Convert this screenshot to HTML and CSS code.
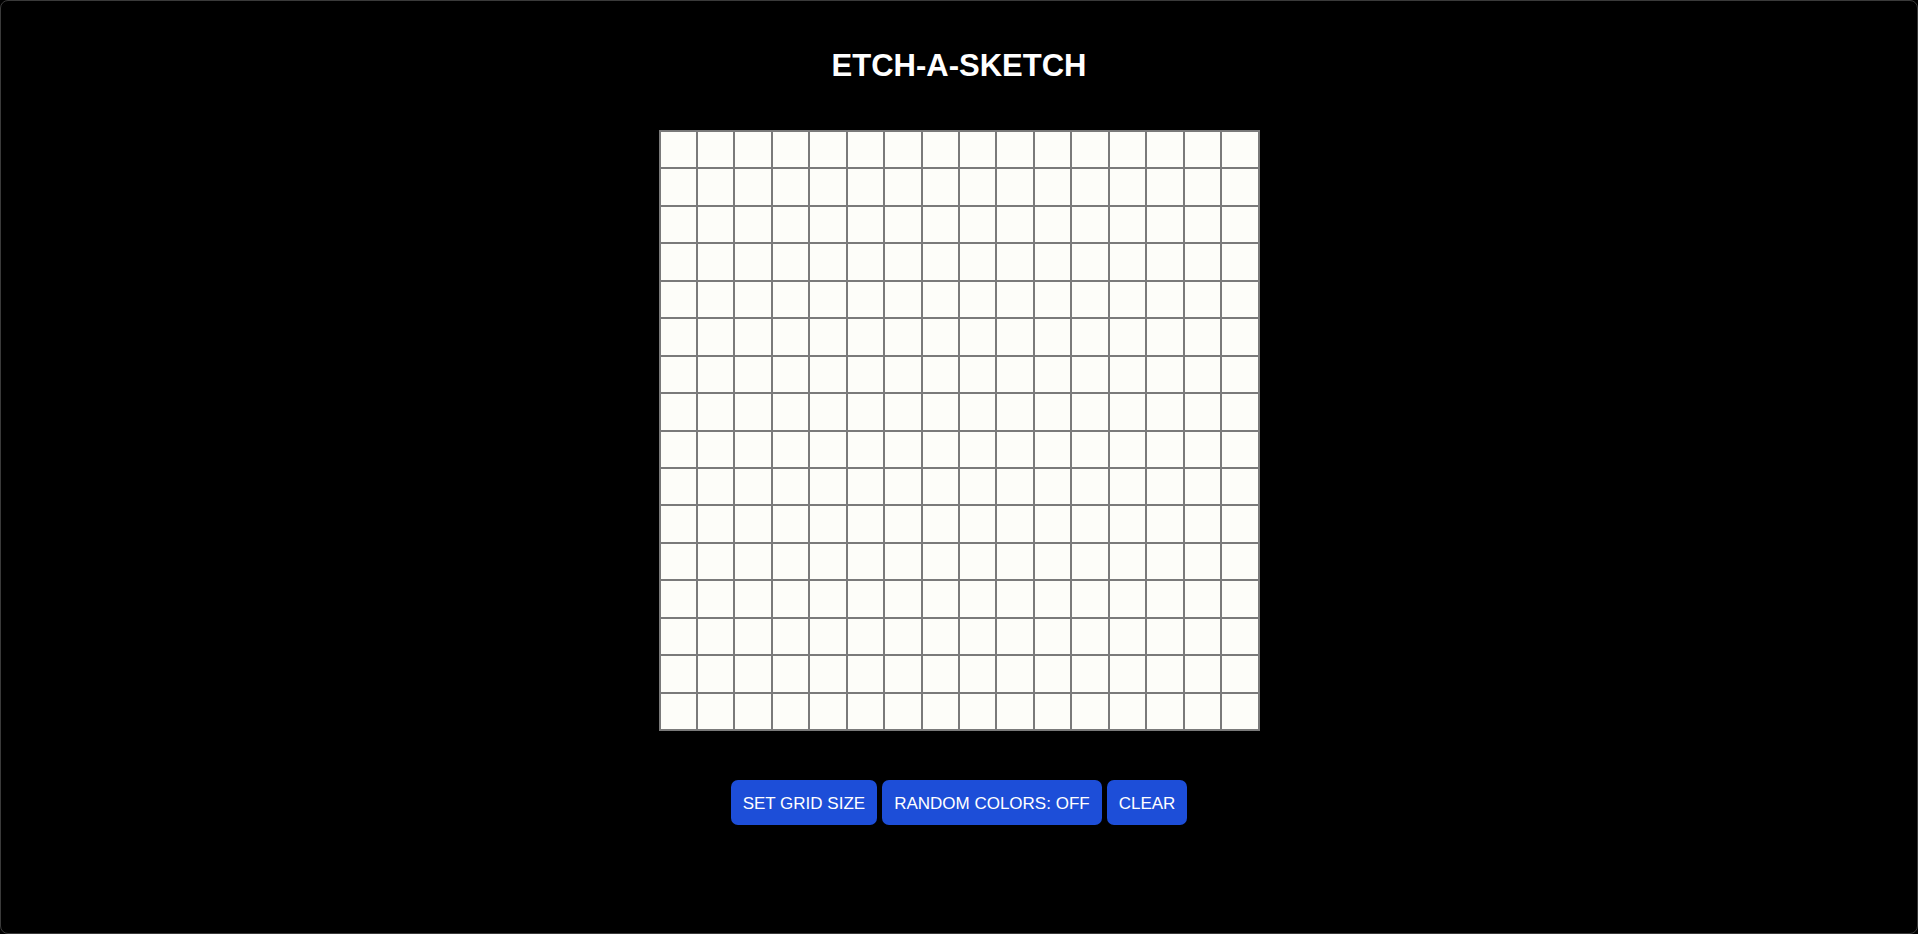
FILE: index.html
```html
<!DOCTYPE html>
<html lang="en">
<head>
<meta charset="utf-8">
<title>Etch-a-Sketch</title>
<link rel="stylesheet" href="styles.css">
</head>
<body>
<main class="app">
  <h1 class="title">ETCH-A-SKETCH</h1>
  <div class="board" id="board"></div>
  <div class="controls">
    <button class="btn">SET GRID SIZE</button>
    <button class="btn">RANDOM COLORS: OFF</button>
    <button class="btn">CLEAR</button>
  </div>
</main>
<script src="script.js"></script>
</body>
</html>
```
FILE: styles.css
```css
* { box-sizing: border-box; }
html, body {
  margin: 0;
  height: 100%;
  background: #000;
}
body {
  font-family: "Liberation Sans", Arial, sans-serif;
  color: #fff;
}
.app {
  height: 100%;
  border: 1px solid #3a3a3a;
  border-radius: 8px;
  display: flex;
  flex-direction: column;
  align-items: center;
  padding-top: 46px;
}
.title {
  margin: 0;
  font-size: 31px;
  line-height: 37px;
  font-weight: 700;
  letter-spacing: 0;
}
.board {
  margin-top: 46px;
  width: 601px;
  height: 601px;
  border: 1px solid #7a7a7a;
  display: grid;
  grid-template-columns: repeat(16, 1fr);
  grid-template-rows: repeat(16, 1fr);
  background: #fcfcf8;
}
.cell {
  border: 1px solid #7a7a7a;
  background: #fdfdf9;
}
.controls {
  margin-top: 49px;
  display: flex;
  gap: 5px;
}
.btn {
  font-family: "Liberation Sans", Arial, sans-serif;
  font-size: 17px;
  line-height: 20px;
  color: #fff;
  background: #1d4ed8;
  border: none;
  border-radius: 7px;
  padding: 14px 12px 11px;
  height: 45px;
  cursor: pointer;
}
```
FILE: script.js
```js
const board = document.getElementById('board');
for (let i = 0; i < 256; i++) {
  const c = document.createElement('div');
  c.className = 'cell';
  board.appendChild(c);
}
```
